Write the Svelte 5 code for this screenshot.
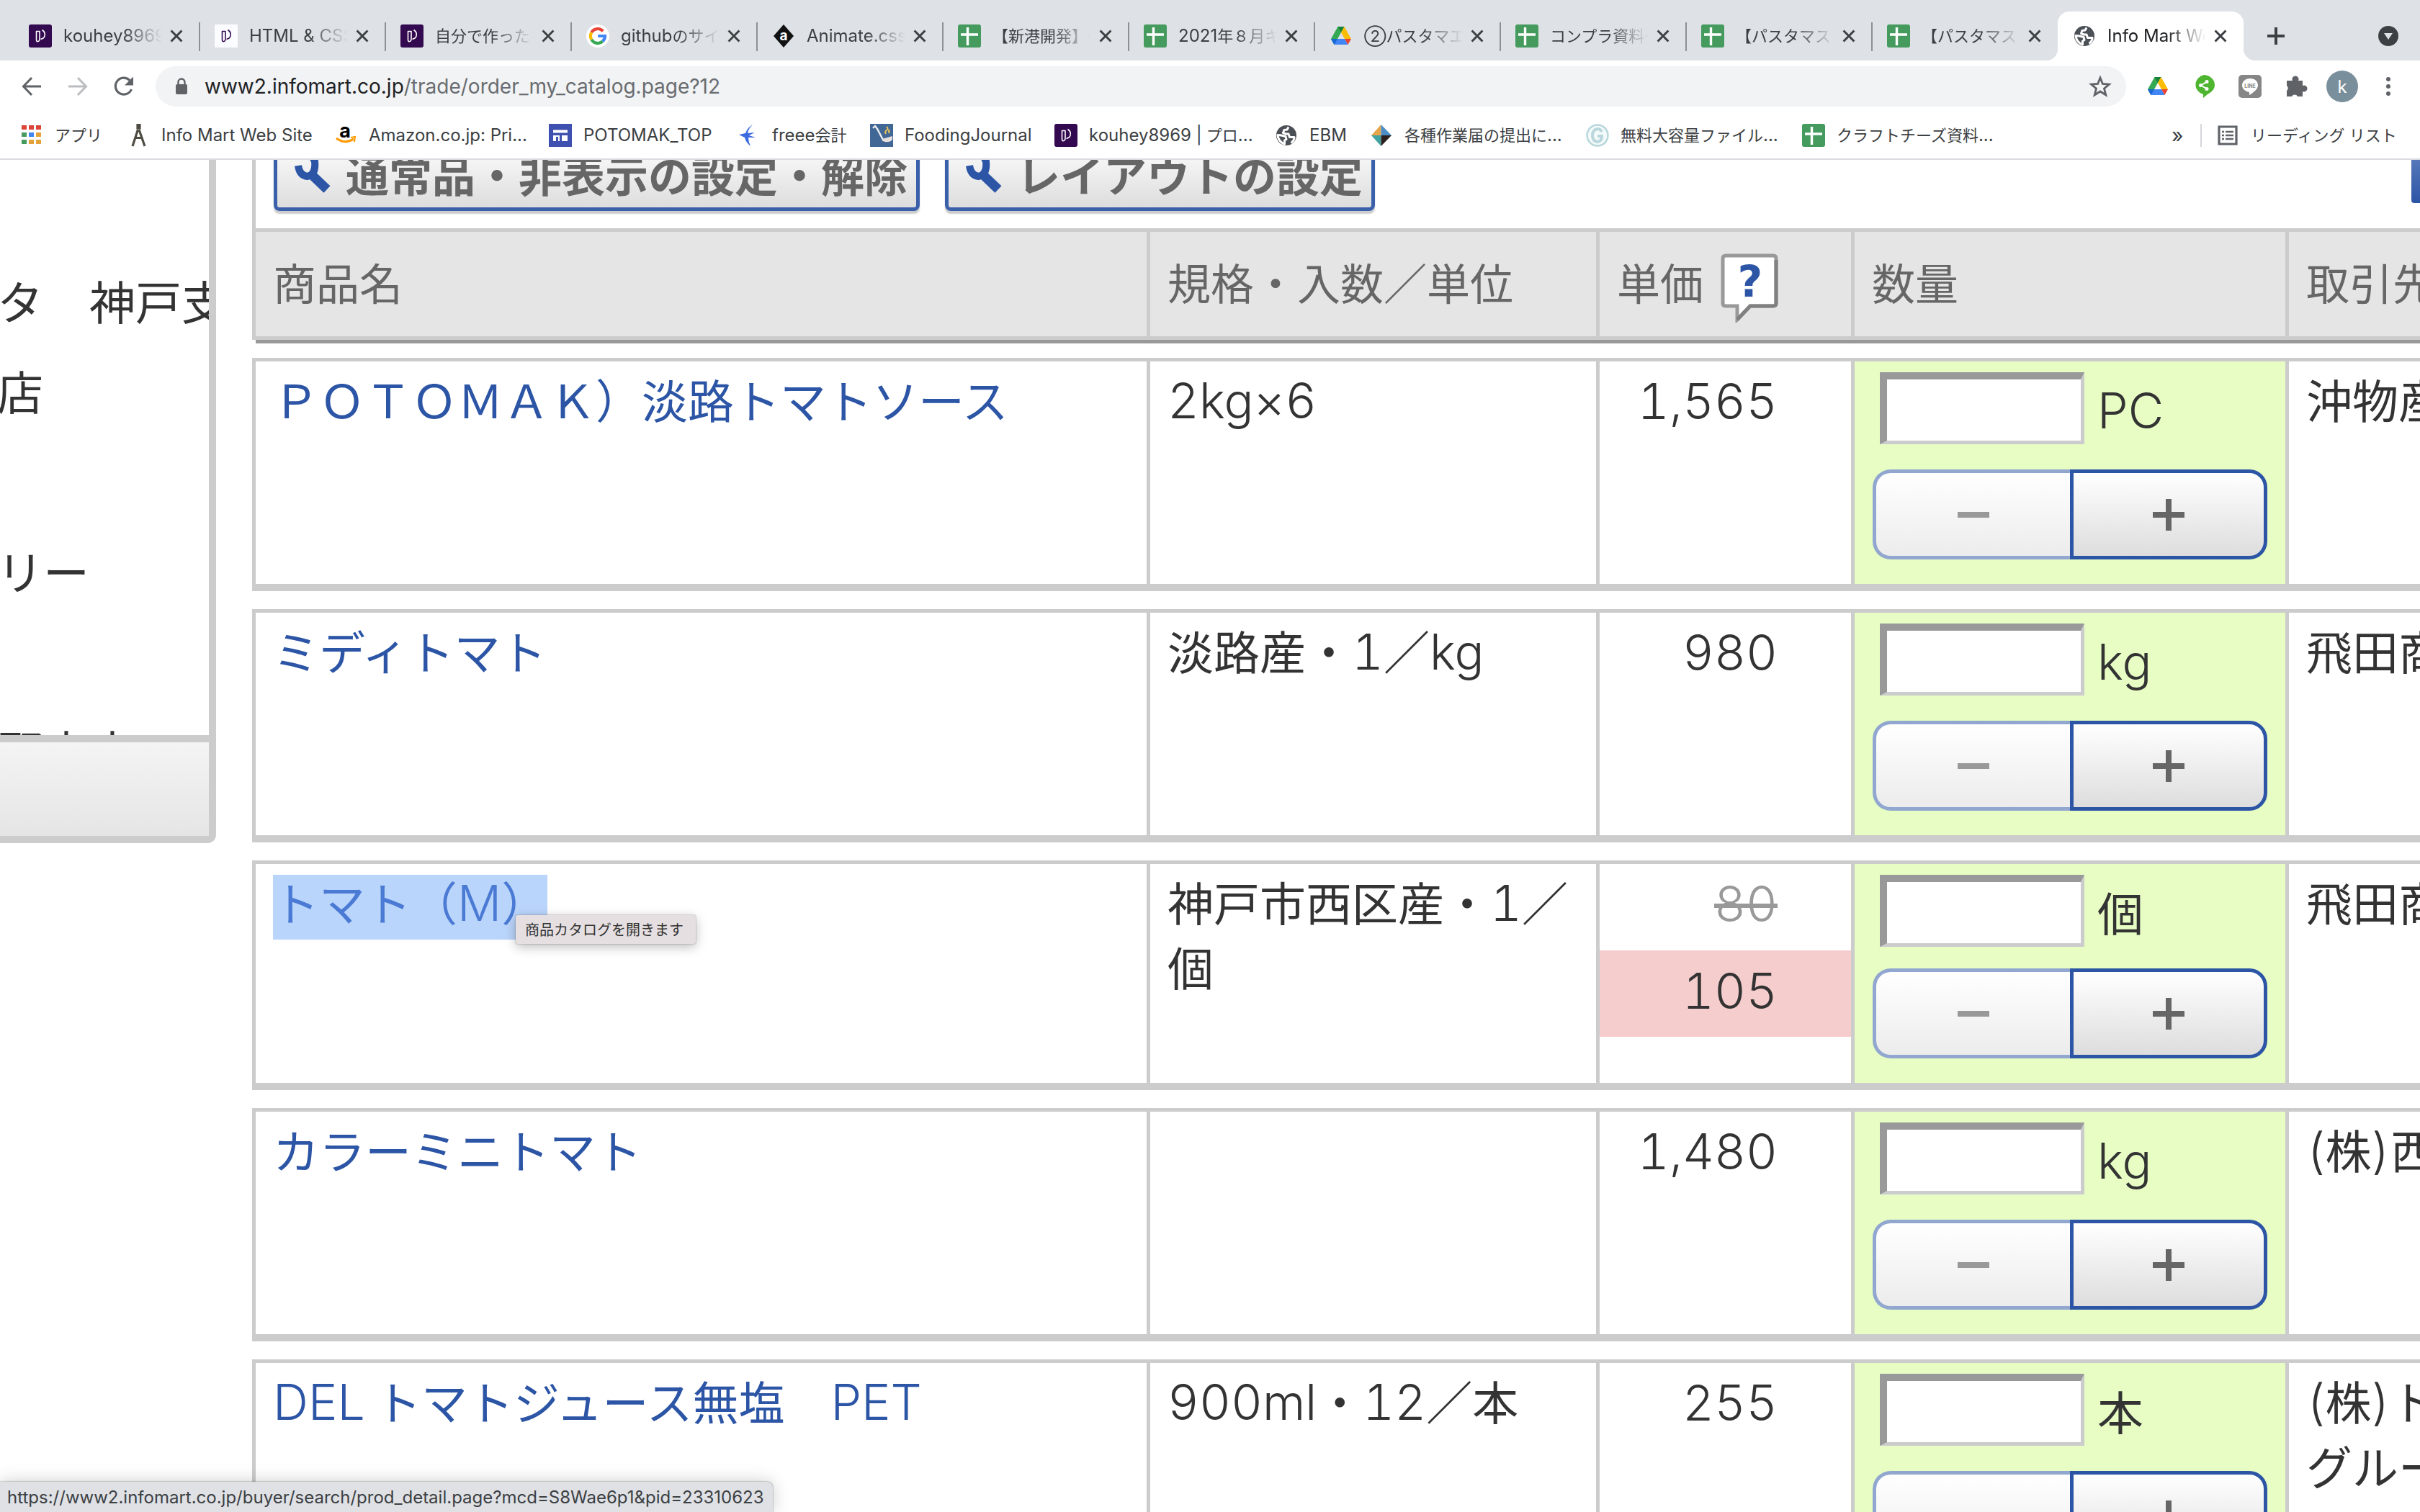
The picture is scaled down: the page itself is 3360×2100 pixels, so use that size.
<script>
  const tabs = [
    { icon: 'progate', title: 'kouhey8969 | プロ' },
    { icon: 'progateLight', title: 'HTML & CSS 初' },
    { icon: 'progate', title: '自分で作ったも' },
    { icon: 'google', title: 'githubのサイト' },
    { icon: 'animate', title: 'Animate.css | A' },
    { icon: 'sheet', title: '【新港開発】発' },
    { icon: 'sheet', title: '2021年８月キャ' },
    { icon: 'drive', title: '②パスタマエス' },
    { icon: 'sheet', title: 'コンプラ資料一' },
    { icon: 'sheet', title: '【パスタマスタ' },
    { icon: 'sheet', title: '【パスタマスタ' },
    { icon: 'globe', title: 'Info Mart Web', active: true },
  ];

  const bookmarks = [
    { icon: 'apps', title: 'アプリ' },
    { icon: 'compass', title: 'Info Mart Web Site' },
    { icon: 'amazon', title: 'Amazon.co.jp: Pri...' },
    { icon: 'portal', title: 'POTOMAK_TOP' },
    { icon: 'swallow', title: 'freee会計' },
    { icon: 'fooding', title: 'FoodingJournal' },
    { icon: 'progate', title: 'kouhey8969 | プロ...' },
    { icon: 'globe', title: 'EBM' },
    { icon: 'diamond', title: '各種作業届の提出に...' },
    { icon: 'giga', title: '無料大容量ファイル...' },
    { icon: 'sheet', title: 'クラフトチーズ資料...' },
  ];

  const extensions = [
    { icon: 'drive', label: 'Google ドライブ' },
    { icon: 'share', label: '共有' },
    { icon: 'line', label: 'LINE' },
    { icon: 'puzzle', label: '拡張機能' },
  ];

  const sidebar = ['タ　神戸支', '店', '', 'リー', '', '野木本'];

  const rows = [
    { name: 'ＰＯＴＯＭＡＫ）淡路トマトソース', spec: '2kg×6', price: '1,565', unit: 'PC', seller: '沖物産' },
    { name: 'ミディトマト', spec: '淡路産・1／kg', price: '980', unit: 'kg', seller: '飛田商' },
    { name: 'トマト（M）', spec: '神戸市西区産・1／個', oldPrice: '80', price: '105', unit: '個', seller: '飛田商', compact: true, selected: true },
    { name: 'カラーミニトマト', spec: '', price: '1,480', unit: 'kg', seller: '(株)西' },
    { name: 'DEL トマトジュース無塩　PET', spec: '900ml・12／本', price: '255', unit: '本', seller: '(株)ト\nグルー' },
  ];

  // Split into runs so Latin letters and digits can use their own face and size.
  const runs = (text) => text.match(/[\x21-\x7e×]+( [\x21-\x7e]+)*|[^\x21-\x7e×]+/g) ?? [];
  const isLatin = (run) => /^[\x21-\x7e×]/.test(run);
</script>

{#snippet mixed(text)}{#each runs(text) as run}<span class={isLatin(run) ? 'latin' : 'cjk'}>{run}</span>{/each}{/snippet}

{#snippet icon(name)}
  <svg class="icon" viewBox="0 0 32 32" aria-hidden="true">
    {#if name === 'progate' || name === 'progateLight'}
      <rect width="32" height="32" rx={name === 'progate' ? 3 : 0} fill={name === 'progate' ? '#330a4f' : '#fbfcff'} />
      <path d="M10.500 9.500h4.500v10q0 4-2.800 4.200q-2-.2-1.700-4.200zM18.500 7.500q5 3.500 3.500 8.500q-1 3.500-5.500 4.500" fill="none" stroke={name === 'progate' ? '#fff' : '#330a4f'} stroke-width="1.600" stroke-linejoin="round" />
    {:else if name === 'google'}
      <circle cx="16" cy="16" r="16" fill="#fff" />
      <g fill="none" stroke-width="4.200">
        <path d="M23.300 9.200A10 10 0 0 0 7.300 11" stroke="#ea4335" />
        <path d="M7.300 11a10 10 0 0 0 0 10" stroke="#fbbc05" />
        <path d="M7.300 21a10 10 0 0 0 15.400 2.400" stroke="#34a853" />
        <path d="M22.700 23.400q3.300-3 3.300-7.400h-9.800" stroke="#4285f4" />
      </g>
    {:else if name === 'animate'}
      <path d="M16 0l14 16-14 16L2 16z" fill="#111" />
      <text x="16" y="22" text-anchor="middle" font-size="19" font-weight="700" fill="#fff">a</text>
    {:else if name === 'sheet'}
      <rect width="32" height="32" rx="3" fill="#459b5e" />
      <path d="M13.500 4v25M4 14h24" stroke="#fff" stroke-width="3.400" />
    {:else if name === 'drive'}
      <path d="M11.500 3h9L11 20 6.500 28 2 20z" fill="#34a853" />
      <path d="M11.500 3h9L16 11z" fill="#188038" />
      <path d="M20.500 3L30 20h-9L16 11z" fill="#fbbc04" />
      <path d="M2 20h19l4.500 8h-19z" fill="#4285f4" />
      <path d="M2 20h9l-4.500 8z" fill="#1967d2" />
      <path d="M21 20h9l-4.500 8z" fill="#ea4335" />
    {:else if name === 'globe'}
      <circle cx="16" cy="16" r="14" fill="#4b4f56" />
      <path d="M19 4.500l-2 3.500-4 .5-1.500 4 4 1.500 3.500 0 1.500 4.500 6.500 0q0 5-4.500 8M4 15.500l5 .5 6 1.500 1 4-2.500 1.500 0 5Q5 25 4 15.500z" fill="none" stroke="#fff" stroke-width="3" stroke-linejoin="round" />
    {:else if name === 'apps'}
      {#each ['#db4437', '#db4437', '#db4437', '#459b5e', '#4285f4', '#e4a33a', '#459b5e', '#e4a33a', '#e4a33a'] as fill, i}
        <rect x={2 + (i % 3) * 10} y={2 + Math.floor(i / 3) * 10} width="7" height="6" {fill} />
      {/each}
    {:else if name === 'compass'}
      <path d="M15 1h3v5h-3zM15.500 8L8 31M17 8l8 23M11 19.500h10" fill="none" stroke="#4e4c42" stroke-width="3.200" />
    {:else if name === 'amazon'}
      <text x="15" y="19" text-anchor="middle" font-size="27" font-weight="700" fill="#000">a</text>
      <path d="M3 20q12 9 24 1" fill="none" stroke="#f90" stroke-width="3" />
      <path d="M23 19l6-1-1 7" fill="none" stroke="#f90" stroke-width="2" />
    {:else if name === 'portal'}
      <rect width="32" height="32" fill="#3f51b0" />
      <path d="M6 8.500h20v4H6zM6 16h9v8H6zM18 16h8v8h-8z" fill="#fff" />
      <path d="M10 18h3v6h-3z" fill="#3f51b0" />
    {:else if name === 'swallow'}
      <path d="M21 1q-6 6-7 12l10-1-8 4 9 3-10 0q0 6 3 12q-7-6-8-12l-8-4 9-2q3-8 10-12z" fill="#3c6ae0" />
    {:else if name === 'fooding'}
      <rect width="32" height="32" fill="#416796" />
      <path d="M4 6l3-3 3 4 9 17" fill="none" stroke="#eee" stroke-width="2.400" />
      <path d="M17 21l14-4q1 8-6 8-7 1-8-4z" fill="#e8e0dc" />
      <path d="M22 14q-2-3 1-5t0-5M27 13q-2-3 0-5" fill="none" stroke="#edc35a" stroke-width="2" />
    {:else if name === 'diamond'}
      <path d="M15.500 1v15H2z" fill="#e5a54b" /><path d="M15.500 1v15H30z" fill="#4b8dc4" />
      <path d="M15.500 31V16H2z" fill="#41a3a0" /><path d="M15.500 31V16H30z" fill="#2a2020" />
    {:else if name === 'giga'}
      <circle cx="16" cy="16" r="14.500" fill="#f4fafa" stroke="#b9d7dc" stroke-width="2.500" />
      <path d="M22 11q-2-4-6-4-7 1-7 9t7 9q6-1 6-8h-6" fill="none" stroke="#b9d7dc" stroke-width="4" />
    {:else if name === 'share'}
      <path d="M16 0a16 14 0 0 1 15 14q0 8-10 13l-6 5v-5A15 14 0 0 1 16 0z" fill="#4db52f" />
      <path d="M20 9.500l-8 5 8 5" fill="none" stroke="#fff" stroke-width="2" />
      <circle cx="20" cy="9.500" r="2.500" fill="#fff" /><circle cx="11.500" cy="14.500" r="2.500" fill="#fff" /><circle cx="20" cy="19.500" r="2.500" fill="#fff" />
    {:else if name === 'line'}
      <rect width="32" height="32" rx="5" fill="#868686" />
      <path d="M16 5c7 0 11 4 11 9.500S20 25 15 28v-4C9 23 5 19 5 14.500S9 5 16 5z" fill="#fff" />
      <text x="16" y="17.500" text-anchor="middle" font-size="7" font-weight="700" fill="#868686">LINE</text>
    {:else if name === 'puzzle'}
      <path d="M3 8h8a4.500 4.500 0 1 1 8 0h6v7a4.500 4.500 0 1 1 0 8v7h-7a4.500 4.500 0 0 0-8 0H3v-8a4.500 4.500 0 0 0 0-7z" fill="#5f6368" />
    {:else if name === 'list'}
      <path d="M4 4h24v24H4z" fill="none" stroke="#5f6368" stroke-width="3.200" />
      <path d="M8 11h3M8 16h3M8 21h3M13 11h11M13 16h11M13 21h11" stroke="#5f6368" stroke-width="2.400" />
    {:else if name === 'close'}
      <path d="M7.500 7.500l17 17M24.500 7.500l-17 17" stroke="#3c4043" stroke-width="3.400" />
    {:else if name === 'plus'}
      <path d="M16 4v24M4 16h24" stroke="#3c4043" stroke-width="4" />
    {:else if name === 'drop'}
      <circle cx="16" cy="16" r="14" fill="#3c4043" /><path d="M10 12h12l-6 9z" fill="#dee1e6" />
    {:else if name === 'back'}
      <path d="M29 16H4.500M16 4L4.500 16 16 28" fill="none" stroke="#5f6368" stroke-width="3" />
    {:else if name === 'forward'}
      <path d="M3 16h24.500M16 4l11.500 12L16 28" fill="none" stroke="#bbbdc0" stroke-width="3" />
    {:else if name === 'reload'}
      <path d="M26.500 20A11.500 11.500 0 1 1 24 7.500" fill="none" stroke="#5f6368" stroke-width="3.200" />
      <path d="M29 2.500v12H17z" fill="#5f6368" />
    {:else if name === 'lock'}
      <rect x="8" y="13" width="16" height="14" rx="2" fill="#5f6368" />
      <path d="M11.500 14v-4a4.500 4.500 0 0 1 9 0v4" fill="none" stroke="#5f6368" stroke-width="2.400" />
    {:else if name === 'star'}
      <path d="M16 4l3.400 8.500 9.100.6-7 5.900 2.300 8.900L16 23l-7.800 4.900 2.300-8.900-7-5.900 9.100-.6z" fill="none" stroke="#5f6368" stroke-width="2.800" />
    {:else if name === 'dots'}
      <circle cx="16" cy="6" r="3" fill="#5f6368" /><circle cx="16" cy="16" r="3" fill="#5f6368" /><circle cx="16" cy="26" r="3" fill="#5f6368" />
    {/if}
  </svg>
{/snippet}

{#snippet wrench()}
  <svg class="wrench" viewBox="0 0 54 70" aria-hidden="true">
    <path d="M6 24Q8 38 19 39Q31 36 29 18L24 8" fill="none" stroke="#2c55a6" stroke-width="10" />
    <path d="M24 36L46 57" fill="none" stroke="#2c55a6" stroke-width="13" />
  </svg>
{/snippet}

<div class="window">
  <header>
    <nav class="tabs" aria-label="タブ">
      {#each tabs as tab}
        <div class="tab" class:active={tab.active}>
          <a href="#tab">{@render icon(tab.icon)}<span class="title">{@render mixed(tab.title)}</span></a>
          <button class="close" aria-label="閉じる">{@render icon('close')}</button>
        </div>
      {/each}
      <button class="new-tab" aria-label="新しいタブ">{@render icon('plus')}</button>
      <button class="tab-search" aria-label="タブを検索">{@render icon('drop')}</button>
    </nav>

    <div class="toolbar">
      <button aria-label="戻る">{@render icon('back')}</button>
      <button aria-label="進む">{@render icon('forward')}</button>
      <button aria-label="再読み込み">{@render icon('reload')}</button>
      <div class="omnibox">
        {@render icon('lock')}
        <span class="url">www2.infomart.co.jp<span>/trade/order_my_catalog.page?12</span></span>
        <button aria-label="ブックマークに追加">{@render icon('star')}</button>
      </div>
      {#each extensions as ext}
        <button aria-label={ext.label}>{@render icon(ext.icon)}</button>
      {/each}
      <button class="avatar" aria-label="プロフィール">k</button>
      <button aria-label="メニュー">{@render icon('dots')}</button>
    </div>

    <nav class="bookmarks" aria-label="ブックマーク">
      {#each bookmarks as mark}
        <a href="#bookmark">{@render icon(mark.icon)}<span>{@render mixed(mark.title)}</span></a>
      {/each}
      <button class="more" aria-label="他のブックマーク">»</button>
      <a class="reading" href="#reading">{@render icon('list')}<span class="cjk">リーディング リスト</span></a>
    </nav>
  </header>

  <div class="page">
    <aside>
      <ul>
        {#each sidebar as line}<li>{line}</li>{/each}
      </ul>
      <div class="panel-foot"></div>
    </aside>

    <main>
      <div class="actions">
        <button class="tool">{@render wrench()}通常品・非表示の設定・解除</button>
        <button class="tool">{@render wrench()}レイアウトの設定</button>
        <button class="primary" aria-label="注文へ進む"></button>
      </div>

      <table>
        <colgroup><col class="c-name" /><col class="c-spec" /><col class="c-price" /><col class="c-qty" /><col class="c-seller" /></colgroup>
        <thead>
          <tr>
            <th>商品名</th>
            <th>規格・入数／単位</th>
            <th>
              <span class="with-help">単価
                <svg class="help" viewBox="0 0 80 96" role="img" aria-label="ヘルプ">
                  <path d="M7 3h66q4 0 4 4v62q0 4-4 4H41L23 92V73H7q-4 0-4-4V7q0-4 4-4z" fill="#fff" stroke="#999" stroke-width="5" />
                  <path d="M77 9v60q0 4-4 4H41L23 92" fill="none" stroke="#808080" stroke-width="5" />
                  <text x="41" y="60" text-anchor="middle" font-size="60" font-weight="700" fill="#2c55a6">?</text>
                </svg>
              </span>
            </th>
            <th>数量</th>
            <th>取引先</th>
          </tr>
        </thead>
        <tbody>
          {#each rows as row, i}
            <tr class:compact={row.compact}>
              <td>
                <a class="product" class:selected={row.selected} href="#product">{@render mixed(row.name)}</a>
                {#if row.selected}<span class="tooltip" role="tooltip">商品カタログを開きます</span>{/if}
              </td>
              <td>{@render mixed(row.spec)}</td>
              <td class="price">
                {#if row.oldPrice}
                  <del>{row.oldPrice}</del>
                  <strong>{row.price}</strong>
                {:else}
                  {row.price}
                {/if}
              </td>
              <td class="qty">
                <div class="amount">
                  <input id="qty-{i}" type="text" />
                  <label for="qty-{i}">{@render mixed(row.unit)}</label>
                </div>
                <div class="stepper">
                  <button disabled aria-label="減らす"><svg viewBox="0 0 44 44"><path d="M0 22h44" /></svg></button>
                  <button aria-label="増やす"><svg viewBox="0 0 44 44"><path d="M0 22h44M22 0v44" /></svg></button>
                </div>
              </td>
              <td class="seller">{@render mixed(row.seller)}</td>
            </tr>
          {/each}
        </tbody>
      </table>
    </main>
  </div>

  <div class="status">https://www2.infomart.co.jp/buyer/search/prod_detail.page?mcd=S8Wae6p1&amp;pid=23310623</div>
</div>

<style>
  :global(body) { margin: 0; background: #fff; }
  .window {
    position: relative;
    display: flex;
    flex-direction: column;
    height: 100vh;
    overflow: hidden;
    font-family: Inter, "Noto Sans CJK JP", sans-serif;
    font-size: 24px;
    color: #3c4043;
  }
  button { padding: 0; border: 0; background: none; font: inherit; color: inherit; }
  a { color: inherit; text-decoration: none; }
  .icon { display: block; flex: none; width: 32px; height: 32px; }

  header { flex: none; border-bottom: 2px solid #dadce0; }
  header .cjk { font-size: 22px; white-space: pre; }
  .tabs { display: flex; align-items: flex-end; height: 84px; padding-left: 19px; background: #dee1e6; }
  .tab { position: relative; display: flex; flex: none; align-items: center; width: 258px; height: 68px; }
  .tab a { display: flex; flex: 1; align-items: center; gap: 16px; min-width: 0; padding-left: 21px; }
  .title {
    flex: 1;
    overflow: hidden;
    line-height: 32px;
    white-space: nowrap;
    mask-image: linear-gradient(to right, #000 60%, transparent);
  }
  .close { margin: 0 18px 0 6px; }
  .close .icon { width: 28px; height: 28px; }
  .tab:not(.active)::after { content: ""; position: absolute; right: -1px; top: 15px; width: 2px; height: 40px; background: #8d9095; }
  .tab:nth-child(11)::after { display: none; }
  .tab.active { background: #fff; border-radius: 16px 16px 0 0; color: #202124; }
  .tab.active::before, .tab.active::after { content: ""; position: absolute; bottom: 0; width: 16px; height: 16px; }
  .tab.active::before { left: -16px; background: radial-gradient(circle at 0 0, transparent 16px, #fff 16px); }
  .tab.active::after { right: -16px; background: radial-gradient(circle at 100% 0, transparent 16px, #fff 16px); }
  .new-tab { margin: 0 0 18px 29px; }
  .tab-search { margin: 0 28px 18px auto; }

  .toolbar { display: flex; align-items: center; height: 72px; padding: 0 28px; gap: 32px; }
  .omnibox { display: flex; flex: 1; align-items: center; height: 56px; margin: 0 -4px; padding: 0 20px; border-radius: 28px; background: #f1f3f4; }
  .url { flex: 1; margin-left: 16px; font-size: 28px; color: #202124; }
  .url span { color: #696c70; }
  .avatar { width: 44px; height: 44px; margin: 0 -6px; border-radius: 50%; background: #7a8f9c; color: #fff; }

  .bookmarks {
    display: grid;
    grid-template-columns: 148px 288px 298px 262px 184px 256px 306px 132px 300px 300px 1fr 40px 305px;
    align-items: center;
    height: 64px;
    padding-left: 28px;
  }
  .bookmarks a { display: flex; align-items: center; gap: 16px; line-height: 32px; white-space: nowrap; }
  .more { font-size: 28px; text-align: left; }
  .reading { padding-left: 20px; border-left: 2px solid #d5d7da; }

  .page { display: flex; flex: 1; align-items: flex-start; min-height: 0; overflow: hidden; font-family: "Noto Sans CJK JP", sans-serif; font-size: 64px; line-height: 90px; color: #333; }
  .page .latin { font-family: Inter, sans-serif; font-size: 68px; font-weight: 300; font-variant-numeric: tabular-nums; line-height: 0; }

  aside { flex: none; width: 300px; margin-right: 50px; box-sizing: border-box; border-right: 10px solid #ccc; border-bottom: 10px solid #ccc; border-radius: 0 0 12px 0; }
  ul { height: 799px; margin: 0; padding: 132px 0 0; overflow: hidden; list-style: none; box-sizing: border-box; }
  li { height: 125px; margin-left: -4px; line-height: 125px; white-space: nowrap; }
  .panel-foot { height: 130px; border-top: 10px solid #ccc; background: linear-gradient(#f4f4f4, #e5e5e5); }

  main { flex: 1; min-width: 0; }
  .actions { display: flex; align-items: flex-end; gap: 35px; height: 95px; padding: 0 0 24px 25px; box-sizing: border-box; border-left: 5px solid #ccc; overflow: hidden; }
  .tool {
    display: flex;
    flex: none;
    align-items: center;
    gap: 18px;
    height: 105px;
    padding: 0 12px 0 23px;
    border: 5px solid #3a60ab;
    border-radius: 8px;
    background: linear-gradient(#fff, #ddd);
    box-shadow: 0 4px 2px #ccc;
    font-size: 60px;
    font-weight: 700;
    color: #666;
  }
  .wrench { width: 54px; height: 70px; }
  .primary { width: 12px; height: 95px; margin: 0 0 11px auto; border-radius: 0 0 0 4px; background: linear-gradient(#6f8cc5, #2c55a6); }

  table { width: 3400px; margin-top: -25px; table-layout: fixed; border-collapse: separate; border-spacing: 0 25px; }
  .c-name { width: 1242px; }
  .c-spec { width: 624px; }
  .c-price { width: 354px; }
  .c-qty { width: 603px; }
  th, td { box-sizing: border-box; padding: 0 24px; border-left: 5px solid #ccc; text-align: left; }
  th { height: 155px; padding-bottom: 8px; border-top: 5px solid #ccc; border-bottom: 5px solid #ccc; background: #e5e5e5; box-shadow: 5px 5px #999; font-size: 60px; font-weight: 400; color: #666; }
  .with-help { display: flex; align-items: center; gap: 24px; height: 90px; }
  .help { width: 80px; height: 96px; margin-top: 18px; font-family: "DejaVu Sans", sans-serif; }
  td { position: relative; height: 324px; padding-top: 6px; border-top: 5px solid #ccc; border-bottom: 10px solid #ccc; vertical-align: top; }
  .compact td { height: 319px; }
  td.seller { white-space: pre-line; }
  .product { color: #2c55a6; }
  .selected { display: inline-block; margin-top: 9px; padding-bottom: 18px; background: #bad5fb; color: #4a7ad4; line-height: 72px; }
  .tooltip {
    position: absolute;
    left: 361px;
    top: 71px;
    padding: 0 17px 0 13px;
    border-radius: 3px;
    background: #e6dfe1;
    box-shadow: 0 4px 16px #0004, 0 0 2px #0006;
    font-size: 20px;
    line-height: 40px;
    color: #333;
    white-space: nowrap;
  }
  td.price { padding-top: 10px; padding-right: 102px; font-family: Inter, sans-serif; font-size: 68px; font-weight: 300; font-variant-numeric: tabular-nums; text-align: right; }
  del { display: block; color: #999; }
  strong { display: block; margin: 20px -102px 0 -24px; padding: 0 102px 8px 0; background: #f6cdcd; font-weight: 300; line-height: 112px; }
  td.qty { padding-top: 15px; padding-left: 25px; padding-right: 25px; background: #e7fdc4; }
  .amount { display: flex; align-items: center; gap: 18px; height: 100px; margin-left: 10px; }
  .amount input { width: 284px; height: 100px; box-sizing: border-box; border: 5px solid #ccc; border-top: 10px solid #999; border-left: 10px solid #999; background: #fff; }
  .stepper { display: flex; height: 125px; margin-top: 35px; }
  .compact .stepper { margin-top: 30px; }
  .stepper button { display: flex; width: 50%; align-items: center; justify-content: center; border: 5px solid #2c55a6; border-radius: 0 25px 25px 0; background: linear-gradient(#fff, #ddd); }
  .stepper button:disabled { border-color: #91a7d0; border-right: 0; border-radius: 25px 0 0 25px; background: linear-gradient(#fff, #ececec); }
  .stepper svg { width: 44px; height: 44px; fill: none; stroke: #666; stroke-width: 8; }
  .stepper button:disabled svg { stroke: #999; }

  .status { position: absolute; left: 0; bottom: 0; height: 42px; padding: 0 12px 0 10px; border-radius: 0 8px 0 0; background: #dfe1e5; box-shadow: 0 0 24px #0003, 0 0 2px #0008; line-height: 44px; }
</style>
